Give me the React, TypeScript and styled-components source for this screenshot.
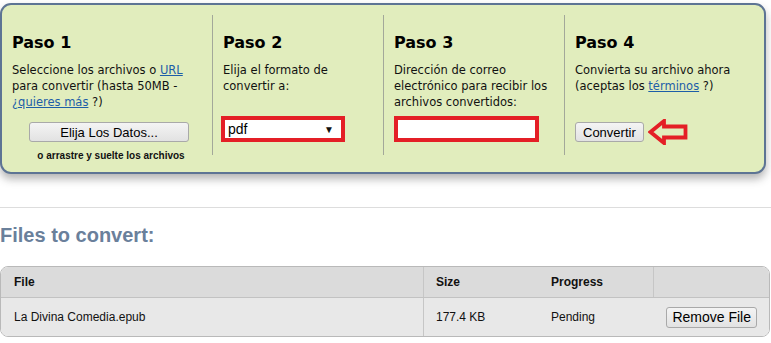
import React from "react";
import styled, { createGlobalStyle } from "styled-components";

const GlobalStyle = createGlobalStyle`
  html, body {
    margin: 0;
    padding: 0;
    background: #ffffff;
  }
  body {
    font-family: "DejaVu Sans", Verdana, sans-serif;
    color: #000;
  }
`;

const Page = styled.div`
  width: 771px;
  padding-top: 3px;
`;

const Panel = styled.div`
  width: 766px;
  box-sizing: border-box;
  background: #e1edbd;
  border: 2px solid #5d7494;
  border-radius: 11px;
  padding: 10px 0 17px;
  box-shadow: 0 5px 8px rgba(40, 40, 40, 0.35);
`;

const Steps = styled.div`
  display: grid;
  grid-template-columns: 210px 171px 181px 1fr;
`;

const Step = styled.div<{ $first?: boolean }>`
  height: 140px;
  box-sizing: border-box;
  padding: 18px 6px 0 10px;
  border-left: ${(p) => (p.$first ? "none" : "1px solid #a3a89a")};
  display: flex;
  flex-direction: column;

  & > * {
    flex-shrink: 0;
  }
`;

const StepTitle = styled.h2`
  margin: 0;
  font-size: 16px;
  line-height: 20px;
  font-weight: bold;
  color: #000;
`;

const StepText = styled.p`
  margin: 9px 0 0;
  height: 48px;
  font-size: 11.5px;
  line-height: 16px;
  color: #111;
`;

const A = styled.a`
  color: #1d5ea8;
  text-decoration: underline;
`;

const Controls = styled.div<{ $center?: boolean }>`
  margin-top: 6px;
  height: 26px;
  display: flex;
  align-items: flex-end;
  justify-content: ${(p) => (p.$center ? "center" : "flex-start")};
  gap: 4px;
`;

const Button = styled.button<{ $w?: number; $size?: number }>`
  font-family: "Liberation Sans", Arial, sans-serif;
  font-size: ${(p) => p.$size ?? 13}px;
  height: ${(p) => (p.$size && p.$size > 13 ? 21 : 20)}px;
  width: ${(p) => (p.$w ? `${p.$w}px` : "auto")};
  padding: 0 ${(p) => (p.$size && p.$size > 13 ? 5 : 7)}px;
  color: #000;
  background: linear-gradient(#f4f4f4, #e2e2e2);
  border: 1px solid #a9a9a9;
  border-radius: 3px;
  box-sizing: border-box;
  line-height: 1;
  white-space: nowrap;
`;

const Note = styled.div`
  margin-top: 8px;
  padding-left: 4px;
  text-align: center;
  font-family: "Liberation Sans", Arial, sans-serif;
  font-weight: bold;
  font-size: 10px;
  line-height: 12px;
  color: #111;
`;

const RedFrame = styled.div<{ $w: number }>`
  width: ${(p) => p.$w}px;
  height: 26px;
  box-sizing: border-box;
  border: 4px solid #e41f26;
  background: #fff;
  display: flex;
  align-items: center;
  justify-content: space-between;
  padding: 0 7px 0 3px;
  font-family: "Liberation Sans", Arial, sans-serif;
  font-size: 14px;
  margin-left: -2px;
`;

const Caret = styled.span`
  font-size: 10px;
  color: #111;
`;

const EmailInput = styled.input`
  width: 145px;
  height: 26px;
  box-sizing: border-box;
  border: 4px solid #e41f26;
  background: #fff;
  outline: none;
  margin: 0;
  padding: 0 3px;
`;

const Divider = styled.hr`
  margin: 33px 0 0;
  border: none;
  border-top: 1px solid #dddddd;
  width: 771px;
`;

const SectionTitle = styled.h3`
  margin: 15px 0 0;
  font-family: "Liberation Sans", Arial, sans-serif;
  font-size: 20px;
  line-height: 24px;
  font-weight: bold;
  color: #6a809b;
`;

const Table = styled.div`
  margin-top: 19px;
  width: 770px;
  box-sizing: border-box;
  border: 1px solid #b9b9b9;
  border-radius: 8px;
  overflow: hidden;
  font-family: "Liberation Sans", Arial, sans-serif;
  font-size: 12px;
`;

const Row = styled.div<{ $head?: boolean }>`
  display: grid;
  grid-template-columns: 422px 115px 115px 1fr;
  height: ${(p) => (p.$head ? 30 : 38)}px;
  background: ${(p) => (p.$head ? "#dbdbdb" : "#e8e8e8")};
  border-bottom: ${(p) => (p.$head ? "1px solid #c2c2c2" : "none")};
  font-weight: ${(p) => (p.$head ? "bold" : "normal")};
  color: #111;
`;

const Cell = styled.div<{ $line?: boolean; $right?: boolean }>`
  display: flex;
  align-items: center;
  padding-left: 12px;
  border-left: ${(p) => (p.$line ? "1px solid #c6c6c6" : "1px solid transparent")};
  justify-content: ${(p) => (p.$right ? "flex-end" : "flex-start")};
  padding-right: ${(p) => (p.$right ? "12px" : "0")};
`;

const Arrow = () => (
  <svg width="40" height="26" viewBox="0 0 40 26" style={{ marginBottom: -3 }}>
    <path
      d="M2.5 13 L16 2 L16 7.5 L37.5 7.5 L37.5 18.5 L16 18.5 L16 24 Z"
      fill="none"
      stroke="#e41f26"
      strokeWidth="3.8"
      strokeLinejoin="miter"
    />
  </svg>
);

export default function App() {
  return (
    <Page>
      <GlobalStyle />
      <Panel>
        <Steps>
          <Step $first>
            <StepTitle>Paso 1</StepTitle>
            <StepText>
              Seleccione los archivos o <A href="#">URL</A>
              <br />
              para convertir (hasta 50MB -
              <br />
              <A href="#">¿quieres más</A> ?)
            </StepText>
            <Controls $center>
              <Button $w={160}>Elija Los Datos...</Button>
            </Controls>
            <Note>o arrastre y suelte los archivos</Note>
          </Step>
          <Step>
            <StepTitle>Paso 2</StepTitle>
            <StepText>
              Elija el formato de
              <br />
              convertir a:
            </StepText>
            <Controls>
              <RedFrame $w={124}>
                <span>pdf</span>
                <Caret>▼</Caret>
              </RedFrame>
            </Controls>
          </Step>
          <Step>
            <StepTitle>Paso 3</StepTitle>
            <StepText>
              Dirección de correo
              <br />
              electrónico para recibir los
              <br />
              archivos convertidos:
            </StepText>
            <Controls>
              <EmailInput type="text" />
            </Controls>
          </Step>
          <Step>
            <StepTitle>Paso 4</StepTitle>
            <StepText>
              Convierta su archivo ahora
              <br />
              (aceptas los <A href="#">términos</A> ?)
            </StepText>
            <Controls>
              <Button>Convertir</Button>
              <Arrow />
            </Controls>
          </Step>
        </Steps>
      </Panel>
      <Divider />
      <SectionTitle>Files to convert:</SectionTitle>
      <Table>
        <Row $head>
          <Cell>File</Cell>
          <Cell $line>Size</Cell>
          <Cell>Progress</Cell>
          <Cell $line></Cell>
        </Row>
        <Row>
          <Cell>La Divina Comedia.epub</Cell>
          <Cell $line>177.4 KB</Cell>
          <Cell>Pending</Cell>
          <Cell $right>
            <Button $size={14}>Remove File</Button>
          </Cell>
        </Row>
      </Table>
    </Page>
  );
}
